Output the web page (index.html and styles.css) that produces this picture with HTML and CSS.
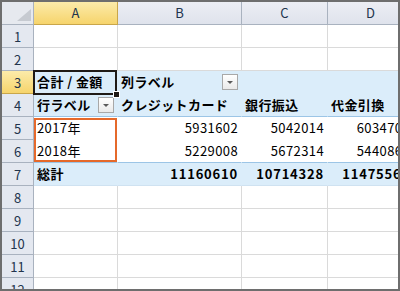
FILE: index.html
```html
<!DOCTYPE html>
<html lang="ja">
<head>
    <meta charset="UTF-8">
    <title>ピボットテーブル</title>
    <link rel="stylesheet" href="styles.css">
</head>
<body>
    <div class="sheet">
        <div class="grid">
            <div class="hd corner"><span class="tri"></span></div>
            <div class="hd col on">A</div>
            <div class="hd col">B</div>
            <div class="hd col">C</div>
            <div class="hd col">D</div>

            <div class="hd row">1</div>
            <div class="c"></div><div class="c"></div><div class="c"></div><div class="c"></div>

            <div class="hd row">2</div>
            <div class="c"></div><div class="c"></div><div class="c"></div><div class="c"></div>

            <div class="hd row on">3</div>
            <div class="c pv head b">合計 / 金額</div>
            <div class="c pv head b">列ラベル<span class="drop"></span></div>
            <div class="c pv head"></div>
            <div class="c pv head"></div>

            <div class="hd row">4</div>
            <div class="c pv head line b">行ラベル<span class="drop"></span></div>
            <div class="c pv head line b">クレジットカード</div>
            <div class="c pv head line b">銀行振込</div>
            <div class="c pv head line b">代金引換</div>

            <div class="hd row">5</div>
            <div class="c pv">2017年</div>
            <div class="c pv num">5931602</div>
            <div class="c pv num">5042014</div>
            <div class="c pv num">6034707</div>

            <div class="hd row">6</div>
            <div class="c pv line">2018年</div>
            <div class="c pv line num">5229008</div>
            <div class="c pv line num">5672314</div>
            <div class="c pv line num">5440861</div>

            <div class="hd row">7</div>
            <div class="c pv total b">総計</div>
            <div class="c pv total b num">11160610</div>
            <div class="c pv total b num">10714328</div>
            <div class="c pv total b num">11475568</div>

            <div class="hd row">8</div>
            <div class="c"></div><div class="c"></div><div class="c"></div><div class="c"></div>
            <div class="hd row">9</div>
            <div class="c"></div><div class="c"></div><div class="c"></div><div class="c"></div>
            <div class="hd row">10</div>
            <div class="c"></div><div class="c"></div><div class="c"></div><div class="c"></div>
            <div class="hd row">11</div>
            <div class="c"></div><div class="c"></div><div class="c"></div><div class="c"></div>
            <div class="hd row">12</div>
            <div class="c"></div><div class="c"></div><div class="c"></div><div class="c"></div>
        </div>

        <!-- active cell A3 and the highlighted range A5:A6 -->
        <div class="active-cell"><span class="handle"></span></div>
        <div class="picked"></div>
    </div>
</body>
</html>
```

FILE: styles.css
```css
* {
    margin: 0;
    padding: 0;
    box-sizing: border-box;
}

body {
    background: #ffffff;
    font-family: "Noto Sans CJK JP", "Noto Sans", sans-serif;
}

.sheet {
    position: relative;
    width: 400px;
    height: 291px;
    border: 2px solid #6e6e6e;
    overflow: hidden;
}

.grid {
    display: grid;
    grid-template-columns: 32px 84px 124px 86px 86px;
    grid-auto-rows: 23px;
    width: 412px;
}

/* headers */
.hd {
    display: flex;
    align-items: center;
    justify-content: center;
    font-size: 13px;
    color: #22344d;
    background: #e4e8f0;
    border-right: 1px solid #a9b2bf;
    border-bottom: 1px solid #a9b2bf;
}

.hd.col {
    background: linear-gradient(#eceef4, #dfe3ec);
    padding-bottom: 1px;
}

.hd.on {
    background: linear-gradient(#fcebaa, #f6d46c);
    border-right-color: #c9a64a;
    border-bottom-color: #c9a64a;
}

.corner {
    position: relative;
    background: #e6e9ef;
}

.corner .tri {
    position: absolute;
    right: 2px;
    bottom: 3px;
    width: 0;
    height: 0;
    border-left: 14px solid transparent;
    border-bottom: 12px solid #c6cad1;
}

/* cells */
.c {
    display: flex;
    align-items: center;
    padding: 0 3px 1px 3px;
    font-size: 13px;
    letter-spacing: 0.4px;
    color: #000;
    white-space: nowrap;
    border-right: 1px solid #dadada;
    border-bottom: 1px solid #dadada;
}

.b {
    font-weight: bold;
}

.num {
    justify-content: flex-end;
}

/* pivot table */
.pv {
    border-right-color: transparent;
    border-bottom-color: transparent;
}

.pv.head,
.pv.total {
    background: #dbedfa;
}

.pv.line {
    border-bottom-color: #9cc5e6;
}

.pv.total {
    border-bottom-color: #cfe2f1;
}

.b.num {
    letter-spacing: 0.8px;
}

.drop {
    margin-left: auto;
    width: 16px;
    height: 16px;
    border: 1px solid #a8a8a8;
    background: linear-gradient(#ffffff, #eaeaea);
    position: relative;
}

.drop::after {
    content: "";
    position: absolute;
    left: 4px;
    top: 6px;
    border-left: 3px solid transparent;
    border-right: 3px solid transparent;
    border-top: 3px solid #5a5a5a;
}

.active-cell {
    position: absolute;
    left: 31px;
    top: 68px;
    width: 84px;
    height: 25px;
    border: 2px solid #1f1a16;
}

.active-cell .handle {
    position: absolute;
    right: -4px;
    bottom: -4px;
    width: 5px;
    height: 5px;
    background: #1f1a16;
    border: 1px solid #fff;
    box-sizing: content-box;
    margin: -1px;
}

.picked {
    position: absolute;
    left: 32px;
    top: 116px;
    width: 83px;
    height: 44px;
    border: 2px solid #e5692b;
}
```
